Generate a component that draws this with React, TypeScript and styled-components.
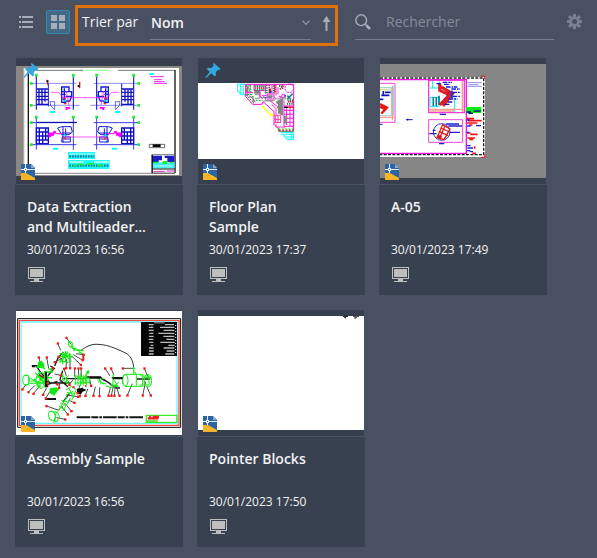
import React from 'react';
import styled, { createGlobalStyle } from 'styled-components';

const color = {
  page: '#485062',
  card: '#38414f',
  strip: '#373f4e',
  seam: '#465363',
  text: '#f2f3f5',
  muted: '#858d98',
  icon: '#a9adb8',
  rule: '#737c8e',
  accent: '#e07008',
};

const GlobalStyle = createGlobalStyle`
  *, *::before, *::after { box-sizing: border-box; }
  body {
    margin: 0;
    background: ${color.page};
    color: ${color.text};
    font-family: 'Open Sans', 'Noto Sans', sans-serif;
    font-size: 14px;
  }
  button, input, select { font: inherit; color: inherit; }
`;

const Page = styled.div`
  padding-bottom: 11px;
`;

const Toolbar = styled.header`
  display: flex;
  align-items: flex-start;
  padding: 5px 15px 0 14px;
  height: 58px;
`;

const Views = styled.div`
  display: flex;
  gap: 8px;
  padding-top: 5px;
  margin-right: 5px;
`;

const IconButton = styled.button<{ $active?: boolean }>`
  display: flex;
  align-items: center;
  justify-content: center;
  width: 24px;
  height: 24px;
  padding: 0;
  border: 1px solid ${(p) => (p.$active ? '#3489b0' : 'transparent')};
  border-radius: 2px;
  background: ${(p) => (p.$active ? '#426a86' : 'transparent')};
  color: ${color.icon};
  cursor: pointer;
`;

const SortBox = styled.div`
  display: flex;
  align-items: flex-start;
  height: 41px;
  padding-left: 4px;
  border: 3px solid ${color.accent};
  margin-right: 17px;
`;

const SortLabel = styled.label`
  width: 68px;
  line-height: 28px;
`;

const SelectWrap = styled.div`
  position: relative;
  width: 161px;

  svg {
    position: absolute;
    right: 1px;
    top: 12px;
    pointer-events: none;
  }
`;

const Select = styled.select`
  display: block;
  width: 100%;
  height: 32px;
  padding: 0 16px 3px 1px;
  border: 0;
  border-bottom: 1px solid ${color.rule};
  border-radius: 0;
  background: transparent;
  appearance: none;
  font-weight: 600;
  outline: none;
`;

const Direction = styled.button`
  display: flex;
  padding: 8px 4px 0 11px;
  border: 0;
  background: transparent;
  color: ${color.icon};
  cursor: pointer;
`;

const Search = styled.label`
  display: flex;
  align-items: center;
  flex: 1;
  min-width: 0;
  height: 35px;
  gap: 15px;
  padding-bottom: 1px;
  border-bottom: 1px solid ${color.rule};
  color: ${color.icon};

  svg { flex: none; }
`;

const SearchInput = styled.input`
  flex: 1;
  min-width: 0;
  height: 28px;
  padding: 0;
  border: 0;
  background: transparent;
  outline: none;

  &::placeholder { color: ${color.muted}; opacity: 1; }
`;

const Settings = styled.button`
  display: flex;
  padding: 9px 0 0;
  margin-left: 13px;
  border: 0;
  background: transparent;
  color: #78818f;
  cursor: pointer;
`;

const Grid = styled.main`
  display: grid;
  grid-template-columns: repeat(auto-fill, 168px);
  gap: 15px 14px;
  padding: 0 15px;
`;

const Card = styled.article`
  display: flex;
  flex-direction: column;
`;

const Preview = styled.div`
  position: relative;
  height: 126px;
  margin: 0 1px;
  background: ${color.strip};
`;

const Drawing = styled.svg`
  display: block;
  width: 100%;
  height: 100%;
`;

const PinMark = styled.svg`
  position: absolute;
  left: 7px;
  top: 5px;
`;

const FileMark = styled.svg`
  position: absolute;
  left: 5px;
  top: 106px;
`;

const Info = styled.div`
  padding: 12px 12px 13px;
  border-top: 1px solid ${color.seam};
  background: ${color.card};
`;

const Title = styled.h2`
  min-height: 40px;
  max-width: 120px;
  margin: 0;
  font-size: 14px;
  font-weight: 600;
  line-height: 20px;
`;

const Stamp = styled.time`
  display: block;
  margin: 3px 0 7px;
  font-size: 12px;
  line-height: 20px;
`;

const Monitor = styled.svg`
  display: block;
  margin-left: 1px;
`;

type Leader = [number, number, number, number];

const BayDrawing = ({ x, y, flip }: { x: number; y: number; flip?: boolean }) => (
  <g transform={`translate(${x} ${y})${flip ? ' scale(-1 1)' : ''}`} fill="none">
    <path d="M-20 25H120M-12 91H130M0 -2V104M111 -2V104" stroke="#8d8df4" strokeWidth="3" />
    <path d="M0 0V104M111 6V104M36 25V94" stroke="#1919d8" strokeWidth="3" />
    <path d="M1 42H36M1 52H36M1 64H36M1 74H36M1 88H36M8 42V88M17 42V88M26 42V80" stroke="#1010c8" strokeWidth="4" />
    <path d="M76 36h22v14h-22zM76 50v32h14M84 40v40M92 50h14v14h-14M88 64h18l-6 14h-14M76 58h12M79 72h9" stroke="#1919d8" strokeWidth="4" />
    <path d="M44 52H66L80 68H148M90 48l8 44" stroke="#f0f" strokeWidth="2" />
    <path d="M84 96h18v5h-8v4h-6v-6" fill="#f0f" />
    <path d="M82 68h6v5h-6zM82 84h8v4h-8z" fill="#f22" />
    <path d="M82 75h8v5h-8z" fill="#0dd" />
    <path d="M41 80h14v24l-12 -12z" stroke="#2222cc" strokeWidth="2" />
    <path d="M-4 -4h8v9h-8zM107 -4h8v9h-8zM-19 21h8v8h-8zM-19 87h8v8h-8z" fill="#1fee36" />
    <path d="M40 108h16v6h-16z" fill="#0ff" />
  </g>
);

const LowerBay = ({ x, y, flip }: { x: number; y: number; flip?: boolean }) => (
  <g transform={`translate(${x} ${y})${flip ? ' scale(-1 1)' : ''}`} fill="none">
    <path d="M-14 17H120M-14 83H120M111 0V98M0 0V98" stroke="#3d3df0" strokeWidth="3" />
    <path d="M0 33H36V80H0zM1 45H36M1 57H36M1 69H36M9 33V80M19 45V80M28 33V70" stroke="#0e0ec8" strokeWidth="4" />
    <path d="M64 33l12 -4h28l4 16 -10 8h-22zM80 30v46M88 34v24M76 48h28M78 60h24v15h-26zM84 66h16" stroke="#1717d2" strokeWidth="3" />
    <path d="M38 48h20v-5h-6v12h-8v4h-6zM58 50h22" stroke="#f0f" fill="#f0f" strokeWidth="3" />
    <path d="M78 60H146" stroke="#f0f" strokeWidth="2" />
    <path d="M82 62h7v5h-7z" fill="#f22" />
    <path d="M82 52h6v6h-6zM50 92h15v6h-15z" fill="#0ff" />
    <path d="M-4 -4h8v9h-8zM107 -4h8v9h-8zM-19 13h8v8h-8zM-19 79h8v8h-8z" fill="#1fee36" />
  </g>
);

const ExtractionDrawing = () => (
  <Drawing viewBox="18 9 498 378" aria-hidden="true" preserveAspectRatio="none">
    <path d="M18 33H516V363H18z" fill="#8b8785" />
    <path d="M42 39H507V360H42z" fill="#fff" />
    <path d="M42 39V360" stroke="#ccc" strokeWidth="3" />
    <path d="M76 46H221M324 46H495" stroke="#777d78" strokeWidth="3" />
    <path d="M225 46H297" stroke="#8eff8e" strokeWidth="3" />
    <path d="M55 48V354M495 45V354" stroke="#161616" strokeWidth="4" />
    <path d="M54 355H495" stroke="#858585" strokeWidth="3" />
    <BayDrawing x={79} y={60} />
    <BayDrawing x={371} y={60} flip />
    <LowerBay x={79} y={186} />
    <LowerBay x={371} y={186} flip />
    <path d="M80 202H201" stroke="#00a" strokeWidth="3" />
    <path d="M113 74V89M209 80V100M205 92h6" stroke="#e31818" strokeWidth="4" />
    <path d="M109 76h6v6h-6zM203 90h6v6h-6z" fill="#181818" />
    <path d="M418 54h13v6h-13z" fill="#0ff" />
    <path d="M421 65H462M432 74H456M432 80H464M432 85H471" stroke="#f02ae8" strokeWidth="3" />
    <path d="M174 291H255V312H174zM174 315H299V342H174z" fill="#22f6fa" />
    <path d="M178 297H253" stroke="#bff" strokeWidth="3" />
    <path d="M178 304H253M178 332H296" stroke="#107e96" strokeWidth="7" strokeDasharray="5 3" />
    <path d="M179 321H221M252 321H296" stroke="#c8ffff" strokeWidth="4" />
    <path d="M188 329h10v5h-10zM204 326h18v5h-18zM232 324h20v6h-20zM262 328h16v6h-16z" fill="#19ed3c" />
    <path d="M418 268H464V278H418z" fill="#fff" stroke="#222" strokeWidth="2" />
    <path d="M428 268H452V276H428z" fill="#050505" />
    <path d="M425 299H494V354H425z" fill="#fff" stroke="#333" strokeWidth="2" />
    <path d="M426 302h30v14h-10v8h-20zM464 302h29v19h-21v-12h-8z" fill="#1b1bc7" />
    <path d="M427 322H494V340H427z" fill="#41eff8" />
    <path d="M430 320h14v5h-14zM458 318h13v8h-13zM480 320h10v5h-10z" fill="#1aee18" />
    <path d="M433 333H487" stroke="#fff" strokeWidth="2" />
    <path d="M430 350H464M471 348H493" stroke="#e026d4" strokeWidth="3" />
    <path d="M426 342H494M427 300V354" stroke="#111" strokeWidth="3" />
  </Drawing>
);

const FloorDrawing = () => (
  <Drawing viewBox="24 9 498 378" aria-hidden="true" preserveAspectRatio="none">
    <path d="M24 84H522V312H24z" fill="#fff" />
    <g fill="none" strokeWidth="3">
      <path d="M143 88H168M143 88V110H150V118H165V124M152 88V118M160 88V118" stroke="#0ff" />
      <path d="M167 88V125L188 148H215L219 140L252 170V208L266 222V229H311V88z" stroke="#f0c" />
      <path d="M170 90V122L190 142M177 90V112L190 127V145M182 90V112M170 98H182M168 106H180M172 118H190M176 126H194M188 136H218" stroke="#1a2" strokeDasharray="6 3" />
      <path d="M173 92V124M166 112H190M180 122L196 142M192 90H222V107H192zM226 90V116M246 90V118M258 90V122M264 96V118" stroke="#f020d8" />
      <path d="M193 94H223M193 104H223M230 90V115M252 91V115M267 93H283M290 146H311M292 136H311" stroke="#128f3b" strokeWidth="6" strokeDasharray="4 3" />
      <path d="M195 99H222M238 90V101M255 90V115M270 103L280 92M294 140H311" stroke="#d31b3c" strokeWidth="5" strokeDasharray="4 2" />
      <path d="M193 112H211M232 126H247M259 144L275 135V180M268 138V176M262 154L278 166" stroke="#838383" strokeWidth="8" />
      <path d="M210 116V128H226V136H252L262 128M215 130C220 118 253 117 257 131M220 138H250M195 119H208V130H194M260 132H286V122M278 135V182" stroke="#8d8d92" />
      <path d="M216 121H228M231 117H252V132H231zM210 111V122L218 132M238 136L262 154M245 148L258 161V180M267 124H276V118H284V128H270z" stroke="#f02ae8" />
      <circle cx="298" cy="100" r="13" stroke="#e837cf" strokeDasharray="8 2" />
      <path d="M292 122L302 132M308 116L292 132" stroke="#128488" strokeWidth="5" />
      <path d="M215 151L242 180H253" stroke="#ff0" strokeWidth="4" />
      <path d="M282 136V220M290 152V210M300 150V214M310 136V228M282 153H310M282 166H311M282 178H311M282 190H311M282 202H311M282 214H311" stroke="#f01cdb" />
      <path d="M250 181H272V203H252M257 183V204M264 183V204M252 193H270M258 207V216H280" stroke="#f03cac" />
      <path d="M286 183V206" stroke="#898989" strokeWidth="9" />
      <path d="M282 157H295" stroke="#111" strokeWidth="4" />
      <path d="M295 157H311" stroke="#f11" strokeWidth="4" />
      <path d="M265 222H311V229H265z" stroke="#1d1" strokeDasharray="6 4" />
      <path d="M267 226H310" stroke="#d13434" strokeWidth="5" strokeDasharray="5 5" />
      <path d="M273 232H311V253H289V246H282V238H273M282 238H311M289 246H311M304 232V252" stroke="#0ff" />
    </g>
    <path d="M236 101h7v14h-7z" fill="#b01830" />
    <path d="M240 108h5v5h-5zM284 120h4v4h-4zM224 126h5v4h-5zM276 98h4v4h-4z" fill="#3038c8" />
  </Drawing>
);

const SheetDrawing = () => (
  <Drawing viewBox="30 9 498 378" aria-hidden="true" preserveAspectRatio="none">
    <path d="M30 27H528V369H30z" fill="#868686" />
    <path d="M30 66H345V306H30z" fill="#fff" />
    <g fill="none">
      <path d="M30 69H341V299H30" stroke="#222" strokeWidth="4" strokeDasharray="9 4" />
      <path d="M30 74H289V295H30" stroke="#f018df" strokeWidth="4" />
      <path d="M333 63H344V72M333 307H344V297" stroke="#f01818" strokeWidth="3" />
      <path d="M30 85H75V202H30" stroke="#ee46df" strokeWidth="3" />
      <path d="M30 98H64V182H30" stroke="#9cc" strokeWidth="3" />
      <path d="M30 104H62" stroke="#d6e391" strokeWidth="5" />
      <path d="M67 92V196M30 187H72" stroke="#ff9c8c" strokeWidth="4" />
      <path d="M71 93V182" stroke="#5ee" strokeWidth="3" />
      <path d="M40 108V119M45 112H62M34 121H58M30 133H40" stroke="#1212c5" strokeWidth="5" />
      <path d="M30 147L51 158L34 176M30 155L47 163" stroke="#e51515" strokeWidth="7" />
      <path d="M30 208H38M108 194H128M113 191V197" stroke="#1919c8" strokeWidth="3" />
      <path d="M176 76H283V173H176z" stroke="#ee3ed8" strokeWidth="4" />
      <path d="M180 99H208V79M188 78V99M254 122V171M180 127H207V155H180z" stroke="#0de9ee" strokeWidth="3" />
      <path d="M190 126V154M199 126V154M207 122V150" stroke="#087d98" strokeWidth="5" />
      <path d="M178 163H280M277 78V171M180 168H253" stroke="#faa092" strokeWidth="4" />
      <path d="M209 85V106L238 120L209 150M213 96L248 116L219 153" stroke="#df1e28" strokeWidth="9" />
      <path d="M212 90L240 108L217 142" stroke="#71111d" strokeWidth="3" strokeDasharray="3 4" />
      <path d="M218 82H246M222 88H240M228 96H262M244 102H270M247 112H272M248 124H271M236 132H262M233 141H249M224 148H239M199 86H212" stroke="#1919cd" strokeWidth="4" strokeDasharray="14 3 5 2" />
      <path d="M245 107V130" stroke="#3232dd" strokeWidth="7" />
      <path d="M176 194H278V262H176z" stroke="#ee46dd" strokeWidth="3" />
      <circle cx="215" cy="231" r="25" stroke="#3434cd" strokeWidth="3" />
      <path d="M201 248L218 209L240 222L222 254zM208 230L235 242M213 219L238 231M225 213L209 249" stroke="#e51818" strokeWidth="4" />
      <path d="M202 243L214 249" stroke="#e51818" strokeWidth="10" />
      <path d="M178 236H200M188 226H197M228 207H267M235 213H276M239 232H270M207 266H223M209 178H228" stroke="#2020cb" strokeWidth="4" />
      <path d="M292 83H335M295 89H325M292 94H336" stroke="#5555e8" strokeWidth="2" />
      <path d="M288 156H334V174H288z" fill="#00ef16" />
      <path d="M289 171H303M295 175H309M311 168H332" stroke="#141488" strokeWidth="4" />
      <path d="M290 191H312M294 197H335M291 204H322M297 210H307M291 234H302M301 238H323M292 249H315M298 253H310M314 274V281M307 295H318" stroke="#ef1515" strokeWidth="5" />
      <path d="M289 195H299M291 213H302M290 232H298M289 272H302M292 279H309M290 287H301M299 290H309M318 212H333" stroke="#2020d5" strokeWidth="4" />
    </g>
  </Drawing>
);

const leaders: Leader[] = [
  [152, 136, 143, 115], [184, 119, 169, 98], [95, 184, 86, 157], [116, 190, 110, 157],
  [115, 208, 128, 190], [48, 239, 37, 253], [75, 241, 55, 261], [88, 245, 70, 266],
  [124, 232, 142, 238], [110, 248, 99, 269], [120, 259, 107, 280], [144, 315, 109, 303],
  [139, 338, 165, 343], [155, 304, 173, 328], [164, 294, 184, 318], [176, 286, 193, 293],
  [170, 270, 204, 275], [198, 146, 220, 149], [190, 149, 217, 165], [186, 154, 212, 179],
  [166, 156, 134, 171], [158, 164, 145, 155], [170, 161, 168, 189], [180, 157, 180, 189],
  [194, 215, 194, 190], [207, 221, 205, 190], [214, 216, 213, 190], [169, 213, 162, 191],
  [189, 224, 178, 239], [211, 238, 202, 264], [217, 247, 209, 273], [233, 252, 226, 272],
  [239, 223, 243, 242], [256, 245, 250, 272], [269, 247, 268, 273], [300, 213, 285, 190],
  [312, 211, 303, 190], [370, 190, 338, 190], [367, 236, 352, 271], [407, 230, 398, 271],
  [410, 244, 422, 271], [415, 218, 403, 190], [302, 245, 295, 272], [310, 244, 304, 272],
  [316, 240, 313, 272], [318, 242, 328, 272], [152, 222, 147, 248], [134, 207, 152, 211],
];

const AssemblyDrawing = () => (
  <Drawing viewBox="18 15 498 378" aria-hidden="true" preserveAspectRatio="none">
    <path d="M18 18H516V390H18z" fill="#fff" />
    <g fill="none">
      <path d="M23 41H512V367H23z" stroke="#080808" strokeWidth="3" />
      <path d="M28 47H507V361H28z" stroke="#f54a43" strokeWidth="4" />
      <path d="M33 51H501V355H33z" stroke="#6ff7fa" strokeWidth="4" />
      <path d="M393 51H501V153H393z" fill="#060606" />
      <path d="M416 59H431M465 59H492M417 67H430M450 67H493M416 76H431M461 76H493M418 85H430M445 85H493M417 94H431M460 94H493M416 103H430M469 103H493M418 112H430M451 112H494M422 121H430M475 121H494M417 129H431M461 129H493M417 138H431M470 138H493M416 147H431M466 147H493" stroke="#bdbdbd" strokeWidth="4" />
      <path d="M497 60V150" stroke="#fff" strokeWidth="3" strokeDasharray="3 6" />
      <path d="M432 53H464" stroke="#6c6c6c" strokeWidth="5" />
      <path d="M213 136C234 121 247 117 264 118C299 119 330 137 351 146C365 158 370 171 371 190" stroke="#353535" strokeWidth="3" />
      <path d="M66 182H79L91 201L120 234H182M121 183L133 190L107 220M134 183L144 159L160 141M158 197L150 224L174 245M160 221H229V216H271L284 228M282 224L319 249H330M305 218H339M381 222H421M111 239L142 229M159 291L178 266" stroke="#151515" strokeWidth="4" />
      {leaders.map(([x1, y1, x2, y2]) => (
        <path key={`${x1}-${y1}-${x2}`} d={`M${x1} ${y1}L${x2} ${y2}`} stroke="#4c4c4c" strokeWidth="3" />
      ))}
      <g stroke="#12ed12" strokeWidth="3">
        <ellipse cx="48" cy="225" rx="10" ry="15" />
        <path d="M41 212H56V239H41M58 217L75 229M62 228H81M58 235H75" />
        <ellipse cx="93" cy="226" rx="15" ry="24" />
        <path d="M76 203L110 240M76 236L113 212M86 197L105 247M79 216H113V234H83M90 205V248M104 199V236M72 221L89 248M97 218H126M84 183L106 192M115 192H126V201H105" strokeWidth="4" />
        <ellipse cx="182" cy="118" rx="6" ry="9" transform="rotate(-28 182 118)" />
        <path d="M183 122L194 137M188 130H199M199 135L221 137M206 140L224 151M149 145L187 156M151 166L175 173M148 173L175 140M158 141V178M167 139V170M179 144V171M148 155L184 149M162 145L184 169" strokeWidth="4" />
        <path d="M191 135H209M158 205V225L180 239M162 224L177 211M170 219V236M155 208L180 235M196 209V240M204 209V244M212 205V243M220 211V242M230 202V239M196 216H227V234H194M202 221H238V232H209M200 212L230 239M211 240L229 206M239 220V237M168 255L185 244L199 254L185 286M170 263L195 265M168 271L189 259M177 250L191 278M171 275L144 319M181 279L158 319M151 293L171 302M154 286L177 292M147 304L166 314M143 317L160 302" />
        <ellipse cx="126" cy="333" rx="10" ry="15" transform="rotate(-22 126 333)" />
        <path d="M121 319L142 322L149 335L141 350L130 351M139 320L132 350" />
        <path d="M260 220L283 239M264 232L280 219M267 218L273 238M272 233L289 237M286 243L309 248M310 207L308 243M302 238L324 246M311 224L325 245M307 250L326 232M371 184V209M366 190H376M371 197L380 210" />
        <path d="M345 208H398V244H345L338 236V215zM389 208L398 215V237L389 244M379 209V244M399 213H417V240H399M403 218H424" />
        <ellipse cx="414" cy="227" rx="11" ry="19" />
        <ellipse cx="346" cy="226" rx="8" ry="17" />
      </g>
      <path d="M84 171L94 167L103 177V189H77L83 179M119 250L140 247L147 253L132 272L119 264M230 198L237 196V206H229M313 239L321 236V246H314" fill="#14e814" />
      <path d="M201 251L216 249L230 255L218 260L213 267H201zM65 180H76V187H66z" fill="#090909" />
      <path d="M105 282H138M239 218H272M308 220H338M108 200V247" stroke="#101010" strokeWidth="6" />
      <path d="M113 228V247M86 209L101 218" stroke="#7c1b18" strokeWidth="4" />
      <path d="M200 337H402" stroke="#151515" strokeWidth="6" strokeDasharray="41 3 21 3 8 3" />
      <path d="M409 331H501V352H409z" stroke="#35ed29" strokeWidth="4" />
      <path d="M410 345H443V351H410z" fill="#6ede4e" />
      <path d="M413 340H445M417 336H423M428 336H447" stroke="#f02020" strokeWidth="7" />
    </g>
    {leaders.map(([x1, y1, x2, y2]) => (
      <path key={`${x2}-${y2}-${x1}`} d={`M${x2 - 3} ${y2 - 3}h7v7h-7z`} fill="#ed1c1c" />
    ))}
    <path d="M217 146h6v20h-6zM109 231h6v7h-6zM180 315h7v6h-7zM187 244h7v6h-7zM225 240h5v5h-5z" fill="#e82424" />
  </Drawing>
);

const PointerDrawing = () => (
  <Drawing viewBox="24 15 498 378" aria-hidden="true" preserveAspectRatio="none">
    <path d="M24 33H522V375H24z" fill="#fff" />
    <path d="M459 33h15v3h-6v4h-5v-4h-4z" fill="#292929" />
    <path d="M489 33h18v3h-6v3h-3v2h-5v-5h-4z" fill="#555" />
  </Drawing>
);

const PinIcon = () => (
  <PinMark width="16" height="16" viewBox="0 0 16 16" role="img" aria-label="Épinglé">
    <path d="M8.8 0L15.6 6L14.2 7.2L13 6.8L10.8 9.3L11 12.2L9.8 13.4L6.3 10.3L1.2 15L.4 14.3L4.8 8.8L1.8 6L3 4.8L6.3 4.9L8.7 2.7L7.8 1z" fill="#35a7df" />
  </PinMark>
);

const DwgIcon = () => (
  <FileMark width="14" height="16" viewBox="0 0 14 16" role="img" aria-label="DWG">
    <path d="M0 0H10L14 4V16H0z" fill="#2d64a3" />
    <path d="M0 9H5L14 14V16H0z" fill="#f6b426" />
    <path d="M10 0L14 4H10z" fill="#8ba9cd" />
    <path d="M4.5 0V9M0 5.5H14" stroke="#e8f0f8" strokeWidth="1" />
    <path d="M3 4H6V7H3z" fill="#e8f0f8" />
    <path d="M4 5H5V6H4z" fill="#2d64a3" />
  </FileMark>
);

const MonitorIcon = () => (
  <Monitor width="17" height="15" viewBox="0 0 17 15" role="img" aria-label="Ordinateur" shapeRendering="crispEdges">
    <path d="M0 0H17V12H0zM1 1V11H16V1z" fill="#bebebe" fillRule="evenodd" />
    <path d="M2 2H15V10H2zM6 12H11V14H6zM2 14H15V15H2z" fill="#bebebe" />
  </Monitor>
);

const files = [
  { name: 'Data Extraction and Multileader...', date: '30/01/2023 16:56', pinned: true, Art: ExtractionDrawing },
  { name: 'Floor Plan Sample', date: '30/01/2023 17:37', pinned: true, Art: FloorDrawing },
  { name: 'A-05', date: '30/01/2023 17:49', pinned: false, Art: SheetDrawing },
  { name: 'Assembly Sample', date: '30/01/2023 16:56', pinned: false, Art: AssemblyDrawing },
  { name: 'Pointer Blocks', date: '30/01/2023 17:50', pinned: false, Art: PointerDrawing },
];

export default function App() {
  return (
    <Page>
      <GlobalStyle />
      <Toolbar>
        <Views>
          <IconButton type="button" aria-label="Liste">
            <svg width="14" height="12" viewBox="0 0 14 12" fill="currentColor" shapeRendering="crispEdges">
              <path d="M0 0h2v2H0zM3 0h11v2H3zM0 5h2v2H0zM3 5h11v2H3zM0 10h2v2H0zM3 10h11v2H3z" />
            </svg>
          </IconButton>
          <IconButton type="button" aria-label="Grille" aria-pressed="true" $active>
            <svg width="14" height="14" viewBox="0 0 14 14" fill="currentColor" shapeRendering="crispEdges">
              <path d="M0 0h6v6H0zM8 0h6v6H8zM0 8h6v6H0zM8 8h6v6H8z" />
            </svg>
          </IconButton>
        </Views>
        <SortBox>
          <SortLabel htmlFor="sort">Trier par</SortLabel>
          <SelectWrap>
            <Select id="sort" defaultValue="Nom">
              <option>Nom</option>
            </Select>
            <svg width="8" height="6" viewBox="0 0 8 6" fill="none" stroke="#8494a5" strokeWidth="1.5">
              <path d="M.5 .8L4 4.3L7.5 .8" />
            </svg>
          </SelectWrap>
          <Direction type="button" aria-label="Ordre croissant">
            <svg width="9" height="15" viewBox="0 0 9 15" fill="currentColor">
              <path d="M4.5 0L8.5 6H5.5V15H3.5V6H.5z" />
            </svg>
          </Direction>
        </SortBox>
        <Search>
          <svg width="16" height="16" viewBox="0 0 16 16" fill="none" stroke="currentColor" aria-hidden="true">
            <circle cx="6.2" cy="6.2" r="5.4" strokeWidth="1.4" />
            <path d="M10 10L11.8 11.8" strokeWidth="1.4" />
            <path d="M11.5 11.5L15 15" strokeWidth="2.6" />
          </svg>
          <SearchInput type="text" placeholder="Rechercher" aria-label="Rechercher" />
        </Search>
        <Settings type="button" aria-label="Paramètres">
          <svg width="15" height="15" viewBox="0 0 15 15">
            <g stroke="currentColor" strokeWidth="3">
              <path d="M7.5 0V3.5M7.5 11.5V15M0 7.5H3.5M11.5 7.5H15M2 2L4.8 4.8M10.2 10.2L13 13M13 2L10.2 4.8M4.8 10.2L2 13" />
            </g>
            <circle cx="7.5" cy="7.5" r="3.9" fill="none" stroke="currentColor" strokeWidth="2.8" />
          </svg>
        </Settings>
      </Toolbar>
      <Grid>
        {files.map(({ name, date, pinned, Art }) => (
          <Card key={name}>
            <Preview>
              <Art />
              {pinned && <PinIcon />}
              <DwgIcon />
            </Preview>
            <Info>
              <Title>{name}</Title>
              <Stamp>{date}</Stamp>
              <MonitorIcon />
            </Info>
          </Card>
        ))}
      </Grid>
    </Page>
  );
}
